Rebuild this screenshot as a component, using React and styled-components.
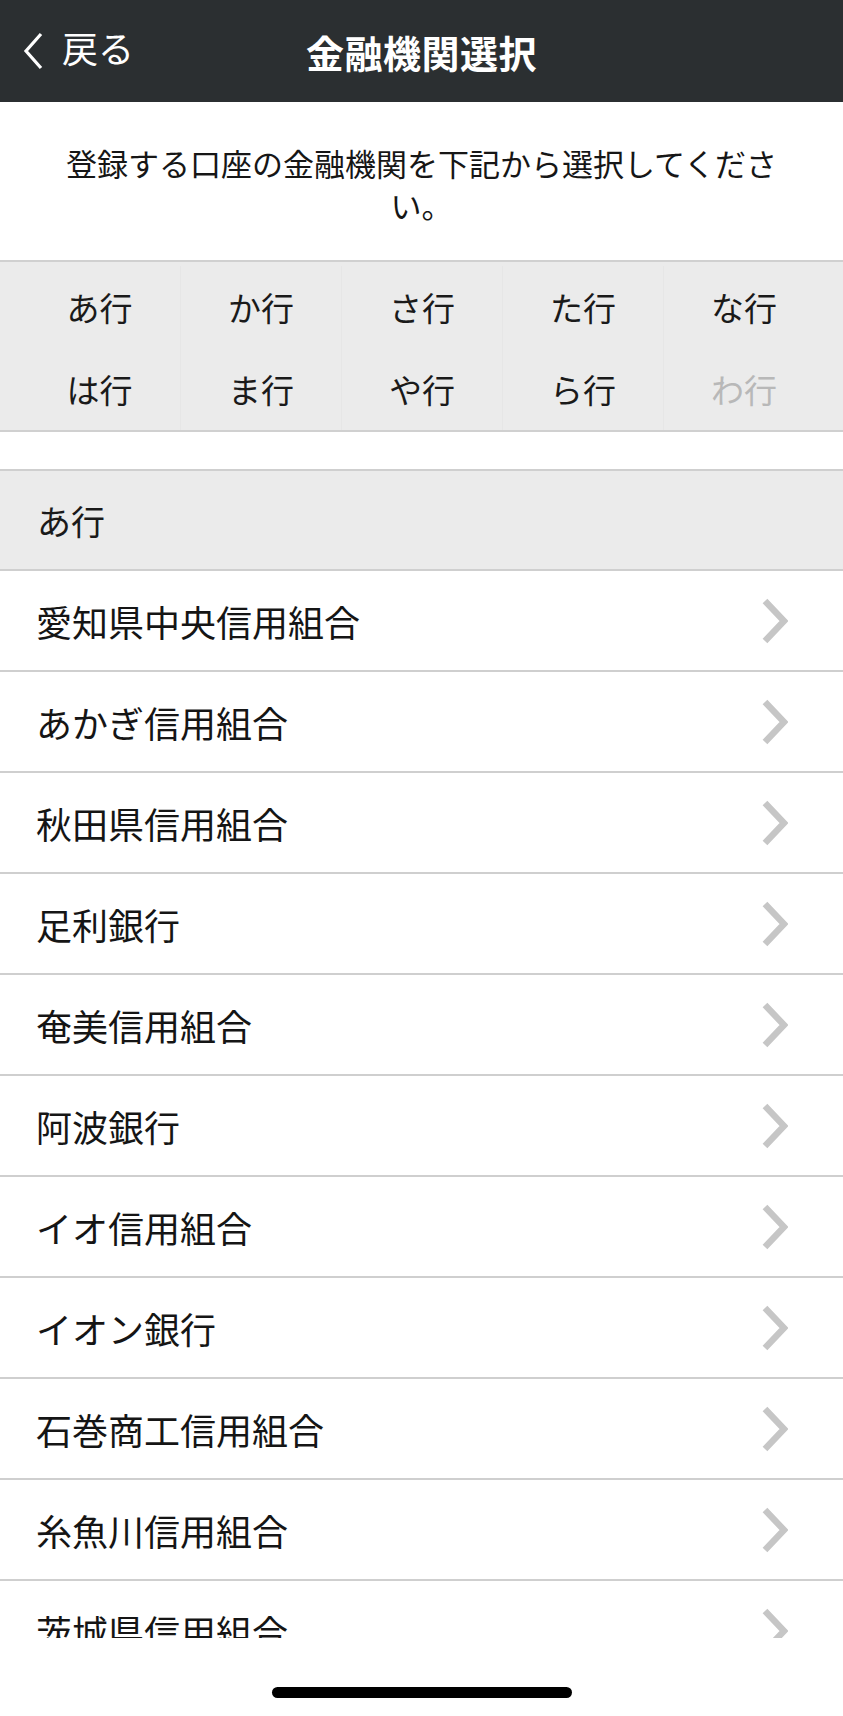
import React from 'react';
import styled, { createGlobalStyle } from 'styled-components';

const GlobalStyle = createGlobalStyle`
  html, body {
    margin: 0;
    padding: 0;
    background: #fff;
  }
  body {
    font-family: "Liberation Sans", "Noto Sans CJK JP", sans-serif;
    color: #151515;
  }
`;

const Page = styled.div`
  width: 843px;
  height: 1716px;
  display: flex;
  flex-direction: column;
  overflow: hidden;
  background: #fff;
`;

const Header = styled.header`
  height: 102px;
  flex-shrink: 0;
  background: #2b2f31;
  display: grid;
  grid-template-columns: 1fr auto 1fr;
  align-items: center;
  color: #fff;
`;

const BackButton = styled.div`
  display: flex;
  align-items: center;
  gap: 19px;
  padding-left: 23px;
  font-size: 36px;
  line-height: 1;
  color: #fff;
`;

const Title = styled.h1`
  margin: 0;
  font-size: 38px;
  font-weight: 700;
  letter-spacing: 0.5px;
  color: #fff;
`;

const Description = styled.p`
  margin: 0;
  height: 158px;
  box-sizing: border-box;
  padding: 43px 50px 0;
  font-size: 31px;
  line-height: 42px;
  text-align: center;
  color: #161616;
`;

const KanaGrid = styled.div`
  flex-shrink: 0;
  display: grid;
  grid-template-columns: repeat(5, 1fr);
  grid-auto-rows: 82px;
  padding: 4px 19px 0;
  background: #ebebeb;
  border-top: 2px solid #d0d0d0;
  border-bottom: 2px solid #d0d0d0;
`;

const KanaCell = styled.div`
  display: flex;
  align-items: center;
  justify-content: center;
  font-size: 33px;
  color: ${props => (props.disabled ? '#b8b8b8' : '#1a1a1a')};
  border-left: ${props => (props.first ? 'none' : '1px solid #e6e6e6')};
`;

const List = styled.div`
  margin-top: 37px;
  flex: 1;
  overflow: hidden;
`;

const SectionHeader = styled.div`
  height: 98px;
  display: flex;
  align-items: center;
  padding-left: 37px;
  background: #ebebeb;
  border-top: 2px solid #cfcfcf;
  border-bottom: 2px solid #cfcfcf;
  font-size: 34px;
  color: #1a1a1a;
`;

const Row = styled.div`
  height: 99px;
  display: flex;
  align-items: center;
  justify-content: space-between;
  padding: 0 55px 0 36px;
  border-bottom: 2px solid #cfcfcf;
  font-size: 36px;
  color: #151515;
`;

const BottomArea = styled.div`
  height: 78px;
  flex-shrink: 0;
  display: flex;
  justify-content: center;
  padding-top: 49px;
  box-sizing: border-box;
  background: #fff;
`;

const HomeIndicator = styled.div`
  width: 300px;
  height: 11px;
  border-radius: 6px;
  background: #000;
`;

const BackChevron = () => (
  <svg width="20" height="38" viewBox="0 0 20 38">
    <polyline points="18,2 3,19 18,36" fill="none" stroke="#fff" strokeWidth="3.2" />
  </svg>
);

const RowChevron = () => (
  <svg width="26" height="46" viewBox="0 0 26 46">
    <polyline points="3,3 22,23 3,43" fill="none" stroke="#c6c6c6" strokeWidth="6.5" />
  </svg>
);

const kana = ['あ行', 'か行', 'さ行', 'た行', 'な行', 'は行', 'ま行', 'や行', 'ら行', 'わ行'];

const banks = [
  '愛知県中央信用組合',
  'あかぎ信用組合',
  '秋田県信用組合',
  '足利銀行',
  '奄美信用組合',
  '阿波銀行',
  'イオ信用組合',
  'イオン銀行',
  '石巻商工信用組合',
  '糸魚川信用組合',
  '茨城県信用組合',
];

export default function App() {
  return (
    <Page>
      <GlobalStyle />
      <Header>
        <BackButton>
          <BackChevron />
          <span>戻る</span>
        </BackButton>
        <Title>金融機関選択</Title>
        <div />
      </Header>
      <Description>登録する口座の金融機関を下記から選択してください。</Description>
      <KanaGrid>
        {kana.map((k, i) => (
          <KanaCell key={k} first={i % 5 === 0} disabled={k === 'わ行'}>
            {k}
          </KanaCell>
        ))}
      </KanaGrid>
      <List>
        <SectionHeader>あ行</SectionHeader>
        {banks.map(name => (
          <Row key={name}>
            <span>{name}</span>
            <RowChevron />
          </Row>
        ))}
      </List>
      <BottomArea>
        <HomeIndicator />
      </BottomArea>
    </Page>
  );
}
